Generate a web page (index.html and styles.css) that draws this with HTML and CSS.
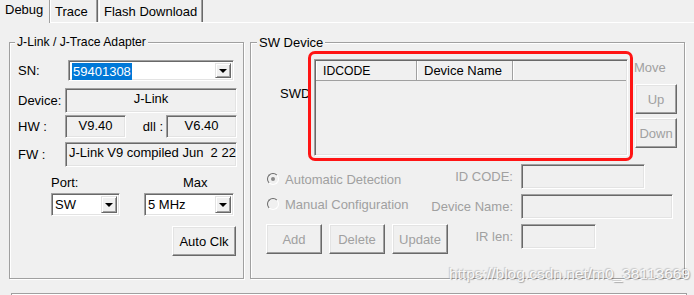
FILE: index.html
```html
<!DOCTYPE html>
<html lang="en">
<head>
  <meta charset="UTF-8" />
  <title>J-Link Debug Settings</title>
  <link rel="stylesheet" href="styles.css">
</head>
<body>
  <div class="tabs">
    <div class="tab active">Debug</div>
    <div class="tab">Trace</div>
    <div class="tab">Flash Download</div>
  </div>

  <div class="page">
    <!-- adapter box -->
    <section class="group adapter">
      <span class="legend legend-adapter">J-Link / J-Trace Adapter</span>

      <div class="row row-sn">
        <span class="lbl lbl-sn">SN:</span>
        <div class="combo combo-sn">
          <span class="combo-text"><span class="sel">59401308</span></span>
          <span class="drop"><i class="arrow"></i></span>
        </div>
      </div>

      <div class="row row-device">
        <span class="lbl lbl-w">Device:</span>
        <div class="field field-full center">J-Link</div>
      </div>

      <div class="row row-hw">
        <span class="lbl lbl-w">HW :</span>
        <div class="field field-hw center">V9.40</div>
        <span class="lbl lbl-dll">dll :</span>
        <div class="field field-dll center">V6.40</div>
      </div>

      <div class="row row-fw">
        <span class="lbl lbl-w">FW :</span>
        <div class="field field-full">J-Link V9 compiled Jun &nbsp;2 22</div>
      </div>

      <div class="row row-port-lbl">
        <span class="lbl lbl-port">Port:</span>
        <span class="lbl lbl-max">Max</span>
      </div>

      <div class="row row-port">
        <div class="combo combo-port">
          <span class="combo-text">SW</span>
          <span class="drop"><i class="arrow"></i></span>
        </div>
        <div class="combo combo-max">
          <span class="combo-text">5 MHz</span>
          <span class="drop"><i class="arrow"></i></span>
        </div>
      </div>

      <div class="row row-auto">
        <button class="btn btn-auto">Auto Clk</button>
      </div>
    </section>

    <!-- sw device box -->
    <section class="group swdev">
      <span class="legend legend-sw">SW Device</span>

      <div class="sw-top">
        <span class="lbl lbl-swd">SWD</span>
        <div class="listview">
          <div class="lv-head">
            <span class="lv-col col-id">IDCODE</span>
            <span class="lv-col col-name">Device Name</span>
            <span class="lv-col col-rest"></span>
          </div>
        </div>
        <div class="move">
          <span class="lbl dis move-lbl">Move</span>
          <button class="btn dis btn-move btn-up">Up</button>
          <button class="btn dis btn-move btn-down">Down</button>
        </div>
      </div>

      <div class="sw-bottom">
        <div class="sw-left">
          <div class="radio-row radio-auto"><i class="radio checked"></i><span class="dis">Automatic Detection</span></div>
          <div class="radio-row radio-manual"><i class="radio"></i><span class="dis">Manual Configuration</span></div>
          <div class="btn-row">
            <button class="btn dis btn-sm">Add</button>
            <button class="btn dis btn-sm">Delete</button>
            <button class="btn dis btn-sm">Update</button>
          </div>
        </div>
        <div class="sw-fields">
          <span class="lbl dis">ID CODE:</span>
          <div class="field input-id"></div>
          <span class="lbl dis">Device Name:</span>
          <div class="field input-name"></div>
          <span class="lbl dis">IR len:</span>
          <div class="field input-ir"></div>
        </div>
      </div>

      <div class="mark"></div>
    </section>
  </div>

  <div class="next-box"></div>

  <div class="watermark">https://blog.csdn.net/m0_38113669</div>
</body>
</html>
```

FILE: styles.css
```css
:root {
  --face: #f0f0f0;
  --shadow: #a0a0a0;
  --dark: #696969;
  --light: #e3e3e3;
  --dis-text: #a0a0a0;
}
* { box-sizing: border-box; margin: 0; padding: 0; }
html, body { height: 100%; }
body {
  font-family: 'Liberation Sans', Arial, sans-serif;
  font-size: 13px;
  color: #000;
  background: var(--face);
  width: 694px;
  height: 295px;
  overflow: hidden;
  position: relative;
}

/* tabs */
.tabs {
  display: flex;
  height: 23px;
  border-bottom: 1px solid #fff;
}
.tab {
  height: 22px;
  line-height: 24px;
  padding-left: 5px;
  border-left: 1px solid #fff;
  border-right: 1px solid var(--dark);
  box-shadow: inset -1px 0 var(--shadow);
}
.tab.active {
  width: 50px;
  height: 23px;
  line-height: 20px;
  margin-bottom: -1px;
  background: var(--face);
  border-left: none;
  border-right: 1px solid var(--shadow);
  box-shadow: none;
}
.tab:nth-child(2) { width: 48px; padding-left: 4px; }
.tab:nth-child(3) { width: 104px; margin-left: 1px; padding-left: 4px; }

/* group boxes */
.page {
  display: flex;
  gap: 6px;
  padding: 19px 0 0 9px;
}
.group {
  position: relative;
  height: 237px;
  border: 1px solid var(--shadow);
  box-shadow: inset 1px 1px #fff, 1px 1px #fff;
}
.adapter { width: 235px; padding-left: 8px; }
.swdev { width: 435px; }
.legend {
  display: table;
  line-height: 15px;
  padding: 0 2px;
  margin-top: -8px;
  background: var(--face);
}
.legend-adapter { margin-left: -3px; font-size: 12.2px; }
.legend-sw { margin-left: 6px; }

.row { display: flex; align-items: center; }
.lbl { line-height: 15px; white-space: nowrap; }
.dis { color: var(--dis-text); }

.row-sn { margin-top: 10px; height: 21px; }
.lbl-sn { width: 50px; }
.lbl-w { width: 47px; }
.row-device { margin-top: 7px; height: 25px; }
.row-hw { margin-top: 2px; height: 23px; }
.row-fw { margin-top: 4px; height: 25px; }
.row-port-lbl { margin-top: 8px; }
.row-port { margin-top: 3px; height: 23px; }
.row-auto { margin-top: 10px; }

.lbl-dll { width: 40px; text-align: right; padding-right: 3px; }
.lbl-port { margin-left: 33px; width: 132px; }

/* sunken fields */
.field {
  height: 100%;
  border: 1px solid;
  border-color: var(--shadow) #fff #fff var(--shadow);
  box-shadow: inset 1px 1px var(--dark), inset -1px -1px var(--light);
  line-height: 19px;
  padding-left: 3px;
  overflow: hidden;
  white-space: nowrap;
}
.field.center { text-align: center; padding-left: 0; }
.field-full { width: 172px; }
.field-hw { width: 61px; }
.field-dll { width: 71px; }

/* combo boxes */
.combo {
  display: flex;
  height: 100%;
  background: #fff;
  border: 1px solid;
  border-color: var(--shadow) #fff #fff var(--shadow);
  box-shadow: inset 1px 1px var(--dark), inset -1px -1px var(--light);
  padding: 2px;
}
.combo-sn { width: 166px; }
.combo-port { width: 69px; margin-left: 33px; }
.combo-max { width: 90px; margin-left: 24px; }
.combo-text {
  flex: 1;
  line-height: 17px;
  padding-left: 1px;
}
.sel {
  display: inline-block;
  background: #0078d7;
  color: #fff;
  padding: 0 1px;
}
.drop {
  width: 16px;
  background: var(--face);
  border: 1px solid;
  border-color: var(--light) var(--dark) var(--dark) var(--light);
  box-shadow: inset 1px 1px #fff, inset -1px -1px var(--shadow);
  display: flex;
  align-items: center;
  justify-content: center;
}
.arrow {
  width: 0;
  height: 0;
  border-left: 4px solid transparent;
  border-right: 4px solid transparent;
  border-top: 4px solid #000;
}

/* buttons */
.btn {
  font: inherit;
  color: #000;
  background: var(--face);
  border: 1px solid;
  border-color: #fff var(--dark) var(--dark) #fff;
  box-shadow: inset -1px -1px var(--shadow), inset 1px 1px var(--light);
  height: 30px;
  padding: 0;
  flex-shrink: 0;
}
.btn.dis { color: var(--dis-text); }
.btn-auto { width: 64px; margin-left: 154px; }

/* sw device */
.sw-top { display: flex; margin-top: 9px; }
.lbl-swd { width: 63px; padding-left: 29px; margin-top: 27px; }
.listview {
  width: 314px;
  height: 97px;
  border: 1px solid;
  border-color: var(--shadow) #fff #fff var(--shadow);
  box-shadow: inset 1px 1px var(--dark), inset -1px -1px var(--light);
  padding: 1px;
}
.lv-head { display: flex; height: 20px; border-bottom: 1px solid var(--shadow); }
.lv-col {
  line-height: 20px;
  padding-left: 7px;
  border-right: 1px solid var(--shadow);
  box-shadow: inset 1px 0 #fff;
}
.col-id { width: 101px; font-size: 12.2px; }
.col-name { width: 96px; }
.col-rest { flex: 1; border-right: none; }

.move { display: flex; flex-direction: column; margin-left: 5px; }
.move-lbl { margin-top: 1px; padding-left: 1px; }
.btn-move { width: 42px; margin-left: 2px; }
.btn-up { margin-top: 9px; }
.btn-down { margin-top: 4px; }

.sw-bottom { display: flex; margin-top: 8px; }
.sw-left { width: 169px; flex-shrink: 0; padding-left: 15px; }
.radio-row { display: flex; align-items: center; height: 16px; white-space: nowrap; }
.radio-auto { margin-top: 7px; }
.radio-manual { margin-top: 9px; }
.radio {
  width: 12px;
  height: 12px;
  margin: 0 6px 0 1px;
  border-radius: 50%;
  border: 1px solid;
  border-color: var(--dark) #fff #fff var(--dark);
  background: var(--face);
  display: flex;
  align-items: center;
  justify-content: center;
}
.radio.checked::after {
  content: "";
  width: 4px;
  height: 4px;
  border-radius: 50%;
  background: #8a8a8a;
}
.btn-row { display: flex; gap: 7px; margin-top: 12px; }
.btn-sm { width: 56px; }

.sw-fields {
  display: grid;
  grid-template-columns: 93px auto;
  grid-auto-rows: 25px;
  column-gap: 8px;
  row-gap: 5px;
  align-items: center;
  justify-items: start;
}
.sw-fields .lbl { justify-self: end; }
.input-id { width: 124px; }
.input-name { width: 152px; }
.input-ir { width: 75px; }

/* annotation */
.mark {
  position: absolute;
  left: 57px;
  top: 8px;
  width: 325px;
  height: 110px;
  border: 3px solid #ff1414;
  border-radius: 7px;
}

.next-box {
  margin: 14px 0 0 11px;
  width: 676px;
  height: 10px;
  border: 1px solid var(--shadow);
  box-shadow: inset 1px 1px #fff;
}

.watermark {
  position: absolute;
  left: 449px;
  top: 265px;
  font-size: 15.5px;
  color: rgba(255, 255, 255, 0.9);
  text-shadow: 1px 1px 1px rgba(0, 0, 0, 0.3), -1px -1px 1px rgba(0, 0, 0, 0.18);
  white-space: nowrap;
}
```
